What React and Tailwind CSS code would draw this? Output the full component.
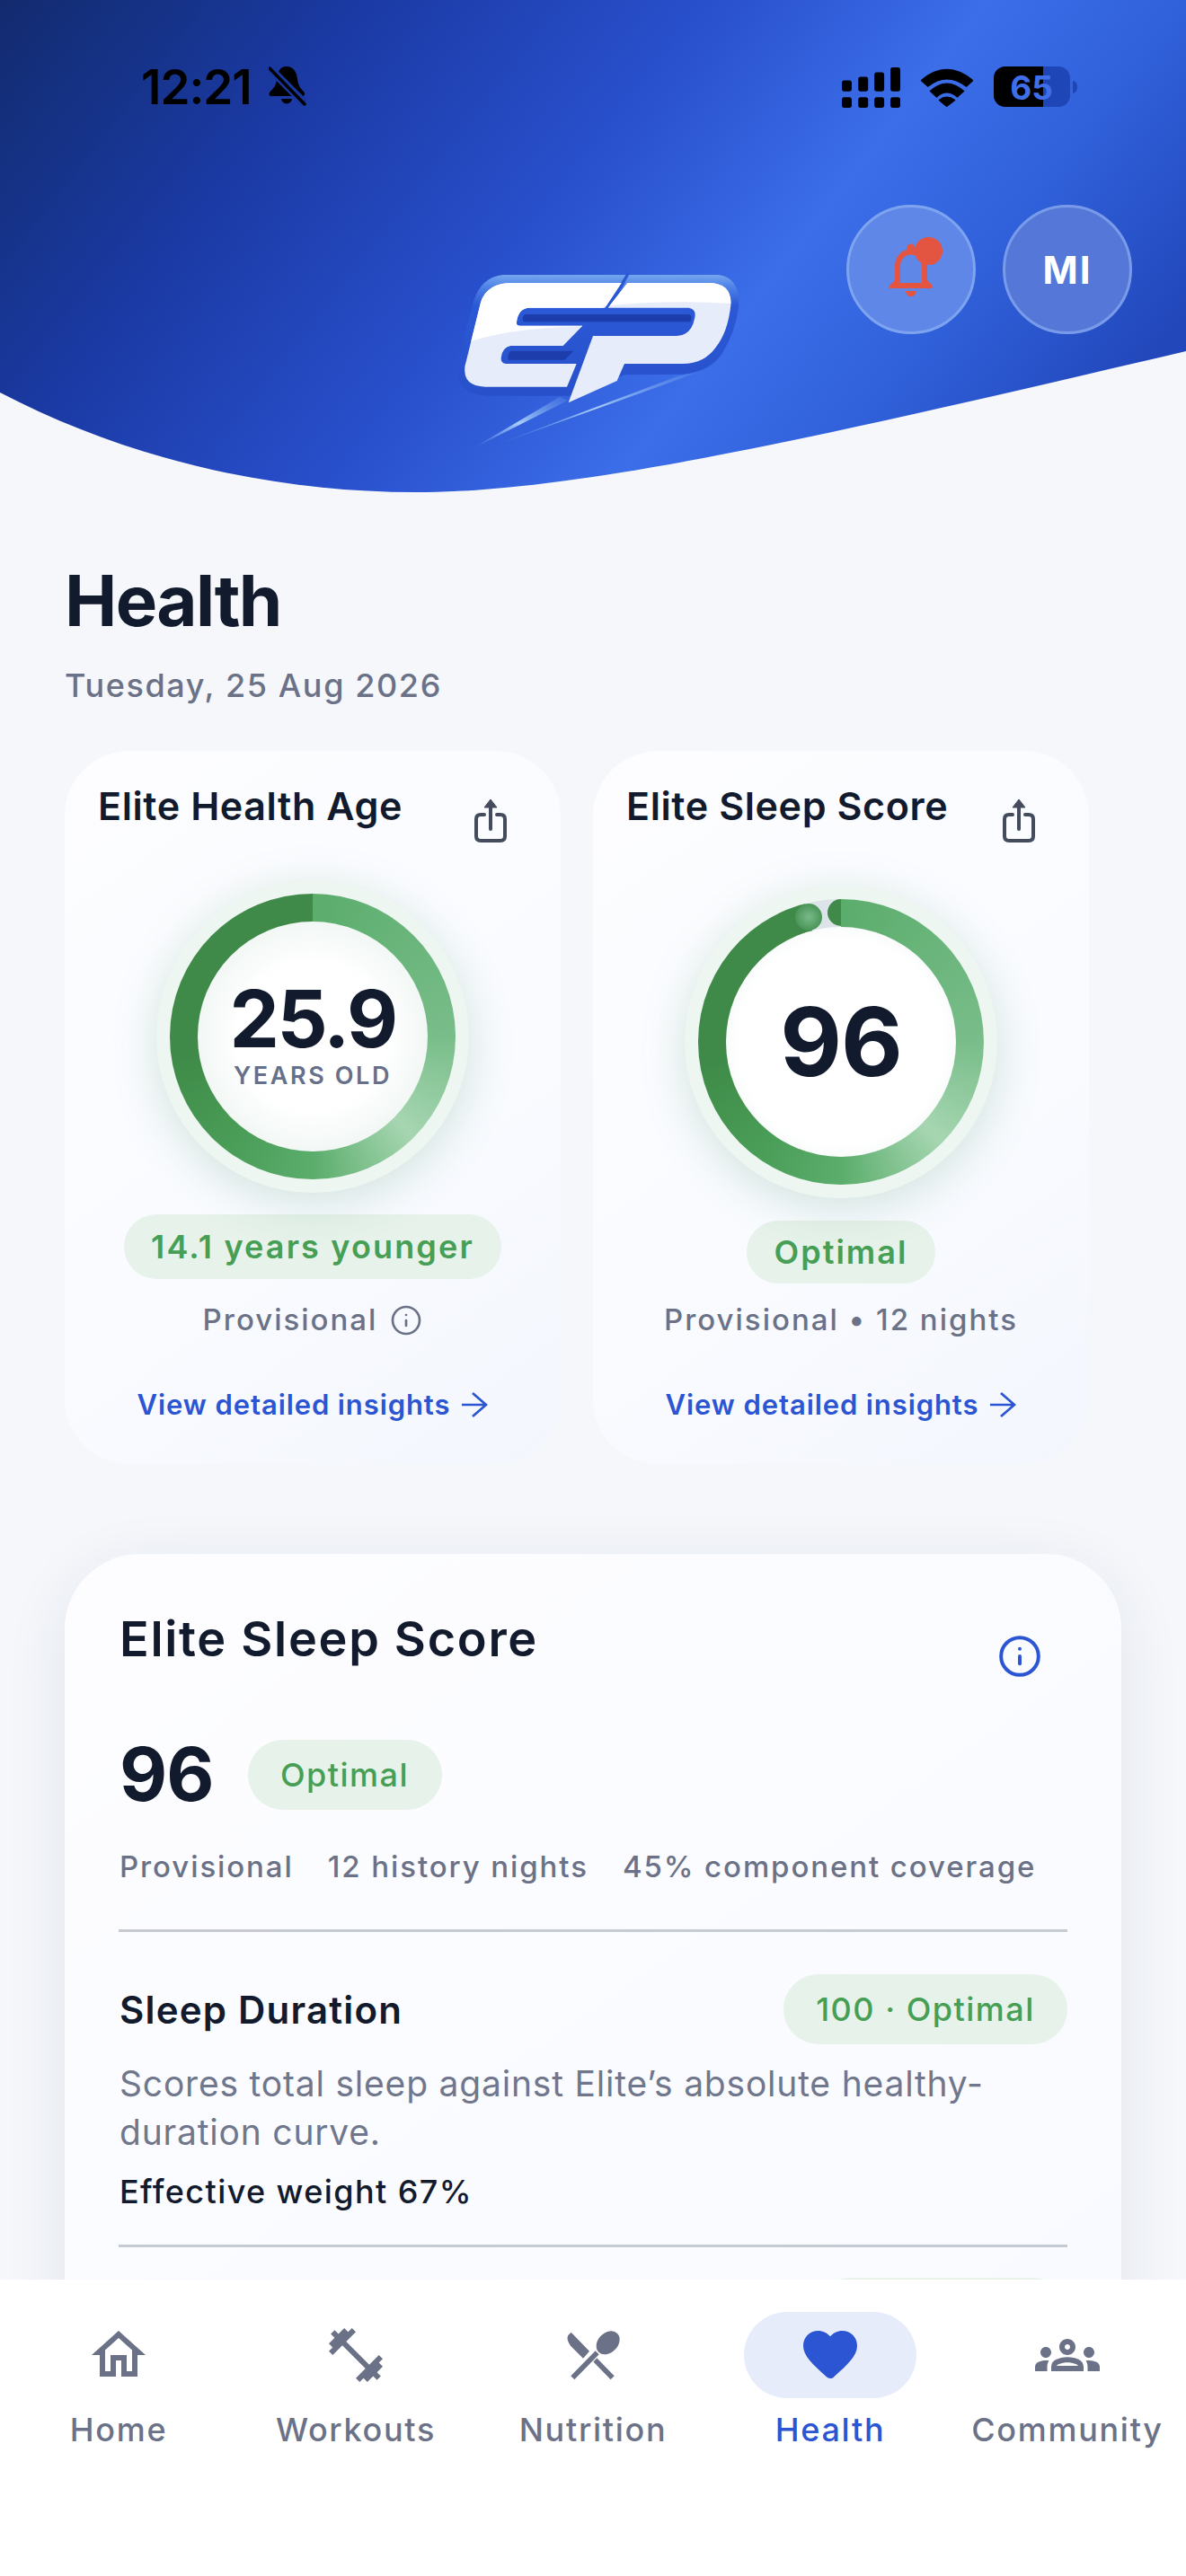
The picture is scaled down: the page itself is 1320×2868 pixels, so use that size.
import React from "react";
import { MdOutlineHome, MdFitnessCenter, MdOutlineGroups, MdNotificationsNone } from "react-icons/md";
import { Info } from "lucide-react";

function HeaderBg() {
  return (
    <svg className="absolute inset-0" width="1320" height="560" viewBox="0 0 1320 560">
      <defs>
        <linearGradient id="hdr" gradientUnits="userSpaceOnUse" x1="0" y1="0" x2="993" y2="772">
          <stop offset="0" stopColor="#132a6e" />
          <stop offset="0.08" stopColor="#14307f" />
          <stop offset="0.26" stopColor="#1b3aa5" />
          <stop offset="0.5" stopColor="#2950cd" />
          <stop offset="0.69" stopColor="#3c6ee9" />
          <stop offset="0.82" stopColor="#3162dc" />
          <stop offset="1" stopColor="#2247bb" />
        </linearGradient>
      </defs>
      <path d="M0 0H1320V391C900 490 640 548 463 548C290 548 130 505 0 437Z" fill="url(#hdr)" />
    </svg>
  );
}

function BellSlash() {
  return (
    <svg width="42" height="48" viewBox="0 0 42 48">
      <path d="M20 1C12 1 9.500 8 9 15C8.500 24 3 27 1 30C0 33 1 34 3 34H37C40 34 41 32 39 29C36 26 33 23 32 15C31.500 8 28 1 20 1Z" fill="#000" />
      <path d="M14 37C15 44 25 44 26 37Z" fill="#000" />
      <path d="M2 4L40 42" stroke="#18389f" strokeWidth="9" />
      <path d="M1 3L40 43" stroke="#000" strokeWidth="3.500" strokeLinecap="round" />
    </svg>
  );
}

function Signal() {
  const tops = [[0, 115], [55, 103], [109, 88], [163, 72]];
  return (
    <svg width="65" height="45" viewBox="110 72 196 135">
      {tops.map(([x, y]) => (
        <g key={x}>
          <rect x={110 + x} y={y} width="33" height={152 - y} rx="8" fill="#000" />
          <rect x={110 + x} y="172" width="33" height="35" rx="8" fill="#000" />
        </g>
      ))}
    </svg>
  );
}

function Wifi() {
  return (
    <svg width="58" height="43" viewBox="375 75 172 127">
      <path d="M375 115Q460 42 547 115L525 135Q460 85 398 135Z" fill="#000" stroke="#000" strokeWidth="3" strokeLinejoin="round" />
      <path d="M405 150Q460 100 517 150L495 170Q460 140 427 170Z" fill="#000" stroke="#000" strokeWidth="3" strokeLinejoin="round" />
      <path d="M460 201L435 180Q460 160 487 180Z" fill="#000" stroke="#000" strokeWidth="3" strokeLinejoin="round" />
    </svg>
  );
}

function Battery() {
  return (
    <svg width="93" height="46" viewBox="0 0 93 46">
      <rect x="0" y="0" width="85" height="45" rx="13" fill="#1e46b6" />
      <path d="M13 0H55V45H13A13 13 0 0 1 0 32V13A13 13 0 0 1 13 0Z" fill="#000" />
      <path d="M88 16C92 17 93 20 93 23C93 26 92 29 88 30Z" fill="#1e46b6" />
      <text x="42" y="37" textAnchor="middle" fontSize="37" fontWeight="700" fontFamily="Inter" fill="#3e6fe8">65</text>
    </svg>
  );
}

function Logo() {
  const body = "M300 108L1020 108Q1092 118 1086 215Q1076 300 1030 372Q990 432 900 440L705 442L520 512L240 512Q136 500 145 410L200 200Q225 115 300 108Z";
  const e = "M330 135L695 135L640 218L385 218Q350 222 345 265Q343 278 355 278L565 278L500 345L325 345Q297 350 293 385Q292 405 310 405L545 405L513 482L240 482Q165 480 172 415L225 200Q245 135 330 135Z";
  const p = "M715 135L985 135Q1065 135 1060 210Q1050 300 1010 350Q970 405 900 405L705 405L680 462L518 535L600 312L880 312Q930 310 940 250Q945 222 920 218L650 218Z";
  return (
    <svg width="400" height="250" viewBox="0 0 1200 750">
      <defs>
        <linearGradient id="lb" x1="0" y1="0" x2="0" y2="1">
          <stop offset="0" stopColor="#74a6ef" />
          <stop offset="0.1" stopColor="#4f82e6" />
          <stop offset="0.25" stopColor="#2b59d6" />
          <stop offset="1" stopColor="#2850cb" />
        </linearGradient>
        <linearGradient id="st" x1="0" y1="1" x2="1" y2="0">
          <stop offset="0" stopColor="#6f9eee" stopOpacity="0" />
          <stop offset="0.5" stopColor="#a8cdf8" />
          <stop offset="1" stopColor="#5a8ce8" stopOpacity="0.3" />
        </linearGradient>
        <clipPath id="gl">
          <path d="M150 345Q300 285 570 280L640 212Q850 190 1075 205L1075 100L150 100Z" />
        </clipPath>
      </defs>
      <path d="M190 692L490 515L515 528Z" fill="url(#st)" />
      <path d="M248 686L880 448L965 425L900 452Z" fill="url(#st)" />
      <path d={body} fill="url(#lb)" />
      <path d="M715 100L640 218L660 218L722 105Z" fill="#2a57d4" />
      <path d="M372 240H920Q935 245 925 265H368Q360 250 372 240Z" fill="#1c3dab" />
      <path d="M325 362H535L505 392H318Q312 375 325 362Z" fill="#1c3dab" />
      <path d={e} fill="#e6ecfa" />
      <path d={p} fill="#e6ecfa" />
      <g clipPath="url(#gl)">
        <path d={e} fill="#fff" />
        <path d={p} fill="#fff" />
      </g>
    </svg>
  );
}

function ShareIcon() {
  return (
    <svg width="36" height="48" viewBox="0 0 36 48" fill="none">
      <path d="M18 0L11 9H25Z" fill="#434b5c" stroke="#434b5c" strokeLinejoin="round" />
      <path d="M18 8V33" stroke="#434b5c" strokeWidth="4" strokeLinecap="round" />
      <path d="M11 17H7Q2 17 2 22V41Q2 46 7 46H29Q34 46 34 41V22Q34 17 29 17H25" stroke="#434b5c" strokeWidth="4" strokeLinecap="round" />
    </svg>
  );
}

function LongArrow() {
  return (
    <svg width="30" height="30" viewBox="0 0 30 30" fill="none">
      <path d="M1 15H28M13 2L28 15L13 28" stroke="#2b55d3" strokeWidth="2.700" />
    </svg>
  );
}

function Ring({ sleep, children }) {
  return (
    <div className="relative flex h-[348px] w-[348px] items-center justify-center rounded-full bg-[#eef6f1] shadow-[0_10px_50px_rgba(70,140,100,0.22)]">
      <div
        className={
          sleep
            ? "flex h-[318px] w-[318px] items-center justify-center rounded-full bg-[conic-gradient(#5bad6c_0deg,#79bd8a_90deg,#a6d6b1_135deg,#5bad6c_180deg,#4a9e58_215deg,#3f8a48_262deg,#3f8a48_345.4deg,#dde4e9_345.4deg,#dde4e9_360deg)]"
            : "flex h-[318px] w-[318px] items-center justify-center rounded-full bg-[conic-gradient(#5bad6c_0deg,#79bd8a_90deg,#a6d6b1_135deg,#5bad6c_180deg,#4a9e58_215deg,#3f8a48_262deg,#3f8a48_360deg)]"
        }
      >
        <div
          className={
            sleep
              ? "flex h-[256px] w-[256px] flex-col items-center justify-center rounded-full bg-[radial-gradient(circle,#ffffff_62%,#e9f3ee_100%)]"
              : "flex h-[256px] w-[256px] flex-col items-center justify-center rounded-full bg-[radial-gradient(circle,#ffffff_45%,#e3efe9_100%)]"
          }
        >
          {children}
        </div>
      </div>
      {sleep && (
        <>
          <div className="absolute left-[159px] top-[15px] h-[30px] w-[15px] rounded-l-full bg-[#3f8a48]" />
          <div className="absolute left-[123px] top-[20px] h-[30px] w-[30px] rounded-full bg-[radial-gradient(circle,#78b98a_0%,#5ea56e_40%,#3f8a48_90%)]" />
        </>
      )}
    </div>
  );
}

function CardHead({ title }) {
  return (
    <div className="flex items-start justify-between pl-[37px] pr-[60px] pt-[34px]">
      <span className="text-[43px] font-semibold leading-[54px] tracking-[0.6px] text-[#121a2e]">{title}</span>
      <div className="mt-[20px]">
        <ShareIcon />
      </div>
    </div>
  );
}

function Insights() {
  return (
    <div className="flex h-[42px] items-center justify-center gap-[12px] text-[31px] font-semibold tracking-[0.9px] text-[#2b55d3]">
      <span>View detailed insights</span>
      <LongArrow />
    </div>
  );
}

const cardClass =
  "flex h-[794px] w-[552px] flex-col rounded-[72px] bg-[linear-gradient(145deg,#fdfdff_0%,#f9fbff_60%,#f3f6fd_100%)]";

function AgeCard() {
  return (
    <div className={cardClass}>
      <CardHead title="Elite Health Age" />
      <div className="flex flex-col items-center">
        <div className="mt-[42px]">
          <Ring>
            <span className="text-[88px] font-bold leading-[80px] tracking-[-2.5px] text-[#121a2e]">25.9</span>
            <span className="mt-[8px] text-[27px] font-semibold leading-[32px] tracking-[2.6px] text-[#66708a]">YEARS OLD</span>
          </Ring>
        </div>
        <div className="mt-[24px] flex h-[72px] w-[420px] items-center justify-center rounded-full bg-[#e6f2ea] text-[36px] font-semibold tracking-[2.15px] text-[#479f55]">
          14.1 years younger
        </div>
        <div className="mt-[22px] flex h-[48px] items-center gap-[14px] text-[33px] font-medium tracking-[2px] text-[#6b7287]">
          <span>Provisional</span>
          <Info size={36} strokeWidth={1.8} />
        </div>
        <div className="mt-[49px]">
          <Insights />
        </div>
      </div>
    </div>
  );
}

function SleepRingCard() {
  return (
    <div className={cardClass}>
      <CardHead title="Elite Sleep Score" />
      <div className="flex flex-col items-center">
        <div className="mt-[48px]">
          <Ring sleep>
            <span className="text-[106px] font-bold leading-[108px] tracking-[-1px] text-[#121a2e]">96</span>
          </Ring>
        </div>
        <div className="mt-[25px] flex h-[70px] w-[210px] items-center justify-center rounded-full bg-[#e6f2ea] text-[36px] font-semibold tracking-[2px] text-[#479f55]">
          Optimal
        </div>
        <div className="mt-[17px] flex h-[48px] items-center text-[33px] font-medium tracking-[2px] text-[#6b7287]">
          Provisional • 12 nights
        </div>
        <div className="mt-[49px]">
          <Insights />
        </div>
      </div>
    </div>
  );
}

function ScoreCard() {
  return (
    <div className="mt-[100px] h-[1000px] w-[1176px] rounded-[84px] bg-[linear-gradient(145deg,#fdfdff_0%,#f8faff_100%)] px-[60px] pt-[62px] shadow-[0_16px_70px_rgba(30,40,80,0.09)]">
      <div className="flex h-[74px] items-start justify-between pl-[1px] pr-[28px]">
        <span className="text-[54px] font-semibold leading-[66px] tracking-[1.7px] text-[#121a2e]">Elite Sleep Score</span>
        <div className="mt-[27px] text-[#2b55d3]">
          <Info size={50} strokeWidth={1.9} />
        </div>
      </div>
      <div className="mt-[71px] flex h-[78px] items-center gap-[38px] pl-[1px]">
        <span className="text-[82px] font-bold leading-[78px] tracking-[-1px] text-[#121a2e]">96</span>
        <div className="flex h-[78px] w-[216px] items-center justify-center rounded-full bg-[#e6f2ea] text-[36px] font-medium tracking-[1.5px] text-[#479f55]">
          Optimal
        </div>
      </div>
      <div className="mt-[40px] flex h-[48px] items-center gap-[38px] pl-[1px] text-[33px] font-medium tracking-[1.9px] text-[#6b7287]">
        <span>Provisional</span>
        <span>12 history nights</span>
        <span>45% component coverage</span>
      </div>
      <div className="mt-[45px] h-[3px] bg-[#c5cad3]" />
      <div className="mt-[47px] flex h-[78px] items-center justify-between pl-[1px]">
        <span className="text-[42px] font-semibold tracking-[1.2px] text-[#121a2e]">Sleep Duration</span>
        <div className="flex h-[78px] w-[316px] items-center justify-center rounded-full bg-[#e6f2ea] text-[36px] font-medium tracking-[1.5px] text-[#479f55]">
          100 · Optimal
        </div>
      </div>
      <p className="mt-[17px] pl-[1px] text-[39px] leading-[54px] tracking-[0.8px] text-[#70778c]">
        Scores total sleep against Elite’s absolute healthy-
        <br />
        duration curve.
      </p>
      <div className="mt-[15px] h-[48px] pl-[1px] text-[36px] font-medium leading-[48px] tracking-[1.4px] text-[#121a2e]">Effective weight 67%</div>
      <div className="mt-[35px] h-[3px] bg-[#c5cad3]" />
      <div className="mt-[34px] flex justify-end">
        <div className="h-[78px] w-[280px] rounded-full bg-[#e6f2ea]" />
      </div>
    </div>
  );
}

function SpoonKnife() {
  return (
    <svg width="72" height="72" viewBox="0 0 216 216">
      <path d="M35 32L96 95L75 119L33 77Q18 57 25 42Z" fill="#6b7287" />
      <path d="M108 117L173 184" stroke="#6b7287" strokeWidth="17" />
      <path d="M118 102L40 184" stroke="#fff" strokeWidth="27" />
      <path d="M122 100L40 184" stroke="#6b7287" strokeWidth="17" />
      <ellipse cx="158" cy="67" rx="44" ry="33" transform="rotate(-45 158 67)" fill="#6b7287" />
    </svg>
  );
}

function Heart() {
  return (
    <svg width="72" height="72" viewBox="0 0 24 24" fill="#2b55d3">
      <path d="M13.350 20.130c-.76.69-1.930.69-2.690-.01l-.11-.1C5.400 15.360 2 12.280 2 8.500 2 5.420 4.420 3 7.500 3c1.740 0 3.410.81 4.500 2.090C13.090 3.810 14.760 3 16.500 3 19.580 3 22 5.420 22 8.500c0 3.780-3.400 6.860-8.550 11.540l-.1.09z" />
    </svg>
  );
}

const items = [
  { label: "Home", icon: <MdOutlineHome size={72} /> },
  { label: "Workouts", icon: <MdFitnessCenter size={72} /> },
  { label: "Nutrition", icon: <SpoonKnife /> },
  { label: "Health", icon: <Heart />, active: true },
  { label: "Community", icon: <MdOutlineGroups size={72} /> },
];

function BottomNav() {
  return (
    <nav className="absolute bottom-0 left-0 right-0 flex h-[330px] bg-white pt-[36px]">
      {items.map((it) => (
        <div key={it.label} className="flex flex-1 flex-col items-center">
          <div className={it.active ? "flex h-[96px] w-[192px] items-center justify-center rounded-full bg-[#e6ecfa]" : "flex h-[96px] w-[192px] items-center justify-center text-[#6b7287]"}>
            {it.icon}
          </div>
          <span className={it.active ? "mt-[13px] text-[36px] font-medium leading-[44px] tracking-[1.7px] text-[#2b55d3]" : "mt-[13px] text-[36px] font-medium leading-[44px] tracking-[1.7px] text-[#6b7287]"}>
            {it.label}
          </span>
        </div>
      ))}
    </nav>
  );
}

export default function App() {
  return (
    <div className="relative h-[2868px] w-[1320px] overflow-hidden bg-[#f5f7fb] font-['Inter',sans-serif]">
      <header className="relative h-[560px]">
        <HeaderBg />
        <div className="relative pt-[62px]">
          <div className="flex h-[70px] items-center justify-between pl-[157px] pr-[121px]">
            <div className="flex items-center gap-[19px]">
              <span className="text-[53px] font-semibold leading-[70px] tracking-[-1px] text-black">12:21</span>
              <BellSlash />
            </div>
            <div className="flex items-center gap-[23px]">
              <Signal />
              <Wifi />
              <Battery />
            </div>
          </div>
          <div className="mt-[96px] grid grid-cols-[460px_400px_1fr]">
            <div />
            <div className="mt-[42px]">
              <Logo />
            </div>
            <div className="flex justify-end gap-[30px] pr-[60px]">
              <div className="relative flex h-[144px] w-[144px] items-center justify-center rounded-full border-[3px] border-[#7ea4f0] bg-[#5f87e8] text-[#e35540]">
                <MdNotificationsNone size={72} />
                <div className="absolute left-[73px] top-[33px] h-[31px] w-[31px] rounded-full bg-[#e35540]" />
              </div>
              <div className="flex h-[144px] w-[144px] items-center justify-center rounded-full border-[3px] border-[#7a9bea] bg-[#5578d8] text-[42px] font-bold tracking-[2px] text-white">
                MI
              </div>
            </div>
          </div>
        </div>
      </header>
      <main className="pl-[72px] pt-[61px]">
        <h1 className="text-[78px] font-bold leading-[96px] tracking-[-1.6px] text-[#121a2e]">Health</h1>
        <div className="mt-[19px] text-[36px] font-medium leading-[54px] tracking-[1.6px] text-[#6b7287]">Tuesday, 25 Aug 2026</div>
        <div className="mt-[46px] flex gap-[36px]">
          <AgeCard />
          <SleepRingCard />
        </div>
        <ScoreCard />
      </main>
      <BottomNav />
    </div>
  );
}
